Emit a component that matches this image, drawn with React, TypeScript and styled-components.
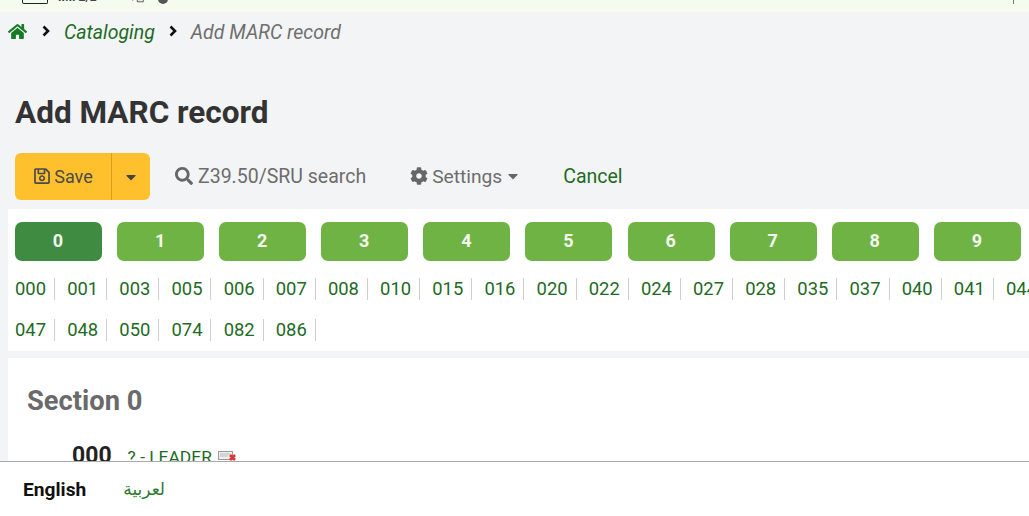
import React from "react";
import styled, { createGlobalStyle } from "styled-components";
import { FaHome, FaRegSave, FaSearch, FaCog, FaCaretDown } from "react-icons/fa";

const Global = createGlobalStyle`
  html, body { margin: 0; padding: 0; height: 100%; overflow: hidden; background: #f3f4f5; }
  body { font-family: Roboto, "Liberation Sans", sans-serif; }
`;

const Page = styled.div`
  width: 1029px;
  height: 516px;
  display: flex;
  flex-direction: column;
  overflow: hidden;
  background: #f3f4f5;
`;
const Main = styled.div`
  height: 461px;
  overflow: hidden;
  flex: none;
`;
const StatusStrip = styled.div`
  height: 12px;
  background: #f5fcef;
  overflow: hidden;
  display: flex;
  align-items: flex-start;
  padding-left: 22px;
  font-size: 12px;
  line-height: 14px;
  color: #444;
`;
const StatusBox = styled.span`
  width: 26px;
  height: 4px;
  border: 1px solid #222;
  border-top: 0;
  border-radius: 0 0 2px 2px;
  box-sizing: border-box;
  flex: none;
`;
const StatusText = styled.span<{ $ml: number; $bold?: boolean }>`
  margin: -10px 0 0 ${(p) => p.$ml}px;
  white-space: nowrap;
  font-weight: ${(p) => (p.$bold ? 700 : 400)};
`;
const StatusDot = styled.span`
  width: 10px;
  height: 10px;
  margin: -6px 0 0 14px;
  border-radius: 50%;
  background: #555;
  flex: none;
`;
const StatusTick = styled.span`
  width: 1px;
  height: 4px;
  margin: 0 15px 0 auto;
  background: #777;
  flex: none;
`;
const Crumbs = styled.nav`
  height: 40px;
  display: flex;
  align-items: center;
  padding-left: 8px;
  font-size: 19.5px;
  font-style: italic;
  color: #6f6f6f;
`;
const CrumbLink = styled.a`
  color: #1e6b24;
`;
const SepIcon = styled.svg`
  flex: none;
  width: 8px;
  height: 12px;
  margin: -2px 14px 0 14px;
`;
const HomeIcon = styled(FaHome)`
  color: #177a25;
  width: 19px;
  height: 19px;
  margin: -2px 1px 0 0;
`;
const Title = styled.h1`
  margin: 42px 0 0 15px;
  font-size: 31.5px;
  line-height: 38px;
  font-weight: 700;
  color: #333;
`;
const Toolbar = styled.div`
  display: flex;
  align-items: center;
  margin: 21px 0 0 15px;
  height: 47px;
`;
const SaveGroup = styled.div`
  display: flex;
  height: 47px;
  width: 135px;
  background: #ffc02d;
  border-radius: 6px;
  color: #4a4a4a;
  font-size: 18px;
`;
const SaveMain = styled.div`
  width: 97px;
  box-sizing: border-box;
  display: flex;
  align-items: center;
  justify-content: center;
  gap: 3px;
  padding-bottom: 1px;
  border-right: 1px solid #d9a020;
`;
const SaveCaret = styled.div`
  flex: 1;
  display: flex;
  align-items: center;
  justify-content: center;
`;
const ToolItem = styled.div<{ $ml: number }>`
  display: flex;
  align-items: center;
  margin-left: ${(p) => p.$ml}px;
  padding-bottom: 1px;
  font-size: 19.5px;
  color: #6d6d6d;
  white-space: nowrap;
`;
const SettingsItem = styled(ToolItem)`
  font-size: 19.2px;
`;
const ToolLink = styled.a<{ $ml: number }>`
  margin-left: ${(p) => p.$ml}px;
  padding-bottom: 1px;
  font-size: 19.5px;
  color: #1e6b24;
`;
const TabsPanel = styled.section`
  margin: 9px 0 0 8px;
  height: 142px;
  background: #fff;
  padding: 13px 0 0 7px;
  box-sizing: border-box;
  overflow: hidden;
`;
const TabRow = styled.div`
  display: flex;
  gap: 15.1px;
  width: 1100px;
`;
const Tab = styled.div<{ $active?: boolean }>`
  flex: none;
  width: 87px;
  height: 39px;
  border-radius: 7px;
  background: ${(p) => (p.$active ? "#3f8b42" : "#6fb345")};
  color: #f4f8ee;
  font-size: 18px;
  font-weight: 700;
  display: flex;
  align-items: center;
  justify-content: center;
  padding: 0 1px 2px 0;
  box-sizing: border-box;
`;
const TagLines = styled.div`
  margin-top: 7px;
`;
const TagLine = styled.div`
  display: flex;
  height: 41px;
  align-items: center;
  width: 1100px;
`;
const Tag = styled.a`
  flex: none;
  box-sizing: border-box;
  width: 40px;
  height: 22px;
  line-height: 22px;
  margin-right: 12.17px;
  font-size: 18.4px;
  color: #1e6b24;
  border-right: 1.5px solid #cfcfcf;
`;
const SectionPanel = styled.section`
  margin: 7px 0 0 8px;
  height: 110px;
  background: #fff;
  padding: 26px 0 0 19px;
  box-sizing: border-box;
  overflow: hidden;
`;
const SectionTitle = styled.h2`
  margin: 0;
  font-size: 27.3px;
  line-height: 34px;
  font-weight: 700;
  color: #6a6a6a;
`;
const FieldRow = styled.div`
  display: flex;
  align-items: baseline;
  margin: 24px 0 0 45px;
`;
const FieldTag = styled.span`
  font-size: 23px;
  font-weight: 700;
  color: #222;
`;
const FieldLabel = styled.a`
  margin-left: 16px;
  font-size: 17.4px;
  color: #1e6b24;
`;
const FieldIcon = styled.svg`
  width: 19px;
  height: 12px;
  margin-left: 6px;
  align-self: center;
`;
const Footer = styled.footer`
  flex: 1;
  background: #fff;
  border-top: 1px solid #a9a9a9;
  display: flex;
  align-items: center;
  padding: 0 0 0 23px;
  gap: 37px;
  font-size: 19.2px;
`;
const Lang = styled.span`
  font-weight: 700;
  color: #111;
`;
const LangLink = styled.a`
  color: #2b7a2f;
  font-family: "DejaVu Sans", "Noto Sans", sans-serif;
  font-size: 17px;
`;

const row1 = ["000","001","003","005","006","007","008","010","015","016","020","022","024","027","028","035","037","040","041","044"];
const row2 = ["047","048","050","074","082","086"];

const Sep = () => (
  <SepIcon viewBox="0 0 8 12">
    <path d="M1.5 1.5L6 6l-4.5 4.5" fill="none" stroke="#111" strokeWidth="2.6" />
  </SepIcon>
);

export default function App() {
  return (
    <Page>
      <Global />
      <Main>
        <StatusStrip>
          <StatusBox />
          <StatusText $ml={10} $bold>IMI 2/2</StatusText>
          <StatusText $ml={19}>ᐧᐧ</StatusText>
          <StatusText $ml={10}>地</StatusText>
          <StatusDot />
          <StatusTick />
        </StatusStrip>
        <Crumbs>
          <HomeIcon />
          <Sep />
          <CrumbLink>Cataloging</CrumbLink>
          <Sep />
          <span>Add MARC record</span>
        </Crumbs>
        <Title>Add MARC record</Title>
        <Toolbar>
          <SaveGroup>
            <SaveMain><FaRegSave size={18} />Save</SaveMain>
            <SaveCaret><FaCaretDown size={16} color="#444" /></SaveCaret>
          </SaveGroup>
          <ToolItem $ml={25}><FaSearch size={18} color="#666" style={{ marginRight: 5 }} />Z39.50/SRU search</ToolItem>
          <SettingsItem $ml={44}><FaCog size={18} color="#666" style={{ marginRight: 4 }} />Settings<FaCaretDown size={16} color="#666" style={{ marginLeft: 3 }} /></SettingsItem>
          <ToolLink $ml={42}>Cancel</ToolLink>
        </Toolbar>
        <TabsPanel>
          <TabRow>
            {Array.from({ length: 10 }, (_, i) => (
              <Tab key={i} $active={i === 0}>{i}</Tab>
            ))}
          </TabRow>
          <TagLines>
            <TagLine>{row1.map((t) => <Tag key={t}>{t}</Tag>)}</TagLine>
            <TagLine>{row2.map((t) => <Tag key={t}>{t}</Tag>)}</TagLine>
          </TagLines>
        </TabsPanel>
        <SectionPanel>
          <SectionTitle>Section 0</SectionTitle>
          <FieldRow>
            <FieldTag>000</FieldTag>
            <FieldLabel>? - LEADER</FieldLabel>
            <FieldIcon viewBox="0 0 19 12">
              <rect x="0.5" y="1.5" width="14" height="8" fill="#eee" stroke="#999" />
              <path d="M2 4h10M2 6h8" stroke="#bbb" />
              <path d="M12 5l5 5M17 5l-5 5" stroke="#d33" strokeWidth="2.6" />
            </FieldIcon>
          </FieldRow>
        </SectionPanel>
      </Main>
      <Footer>
        <Lang>English</Lang>
        <LangLink dir="rtl">لعربية</LangLink>
      </Footer>
    </Page>
  );
}
